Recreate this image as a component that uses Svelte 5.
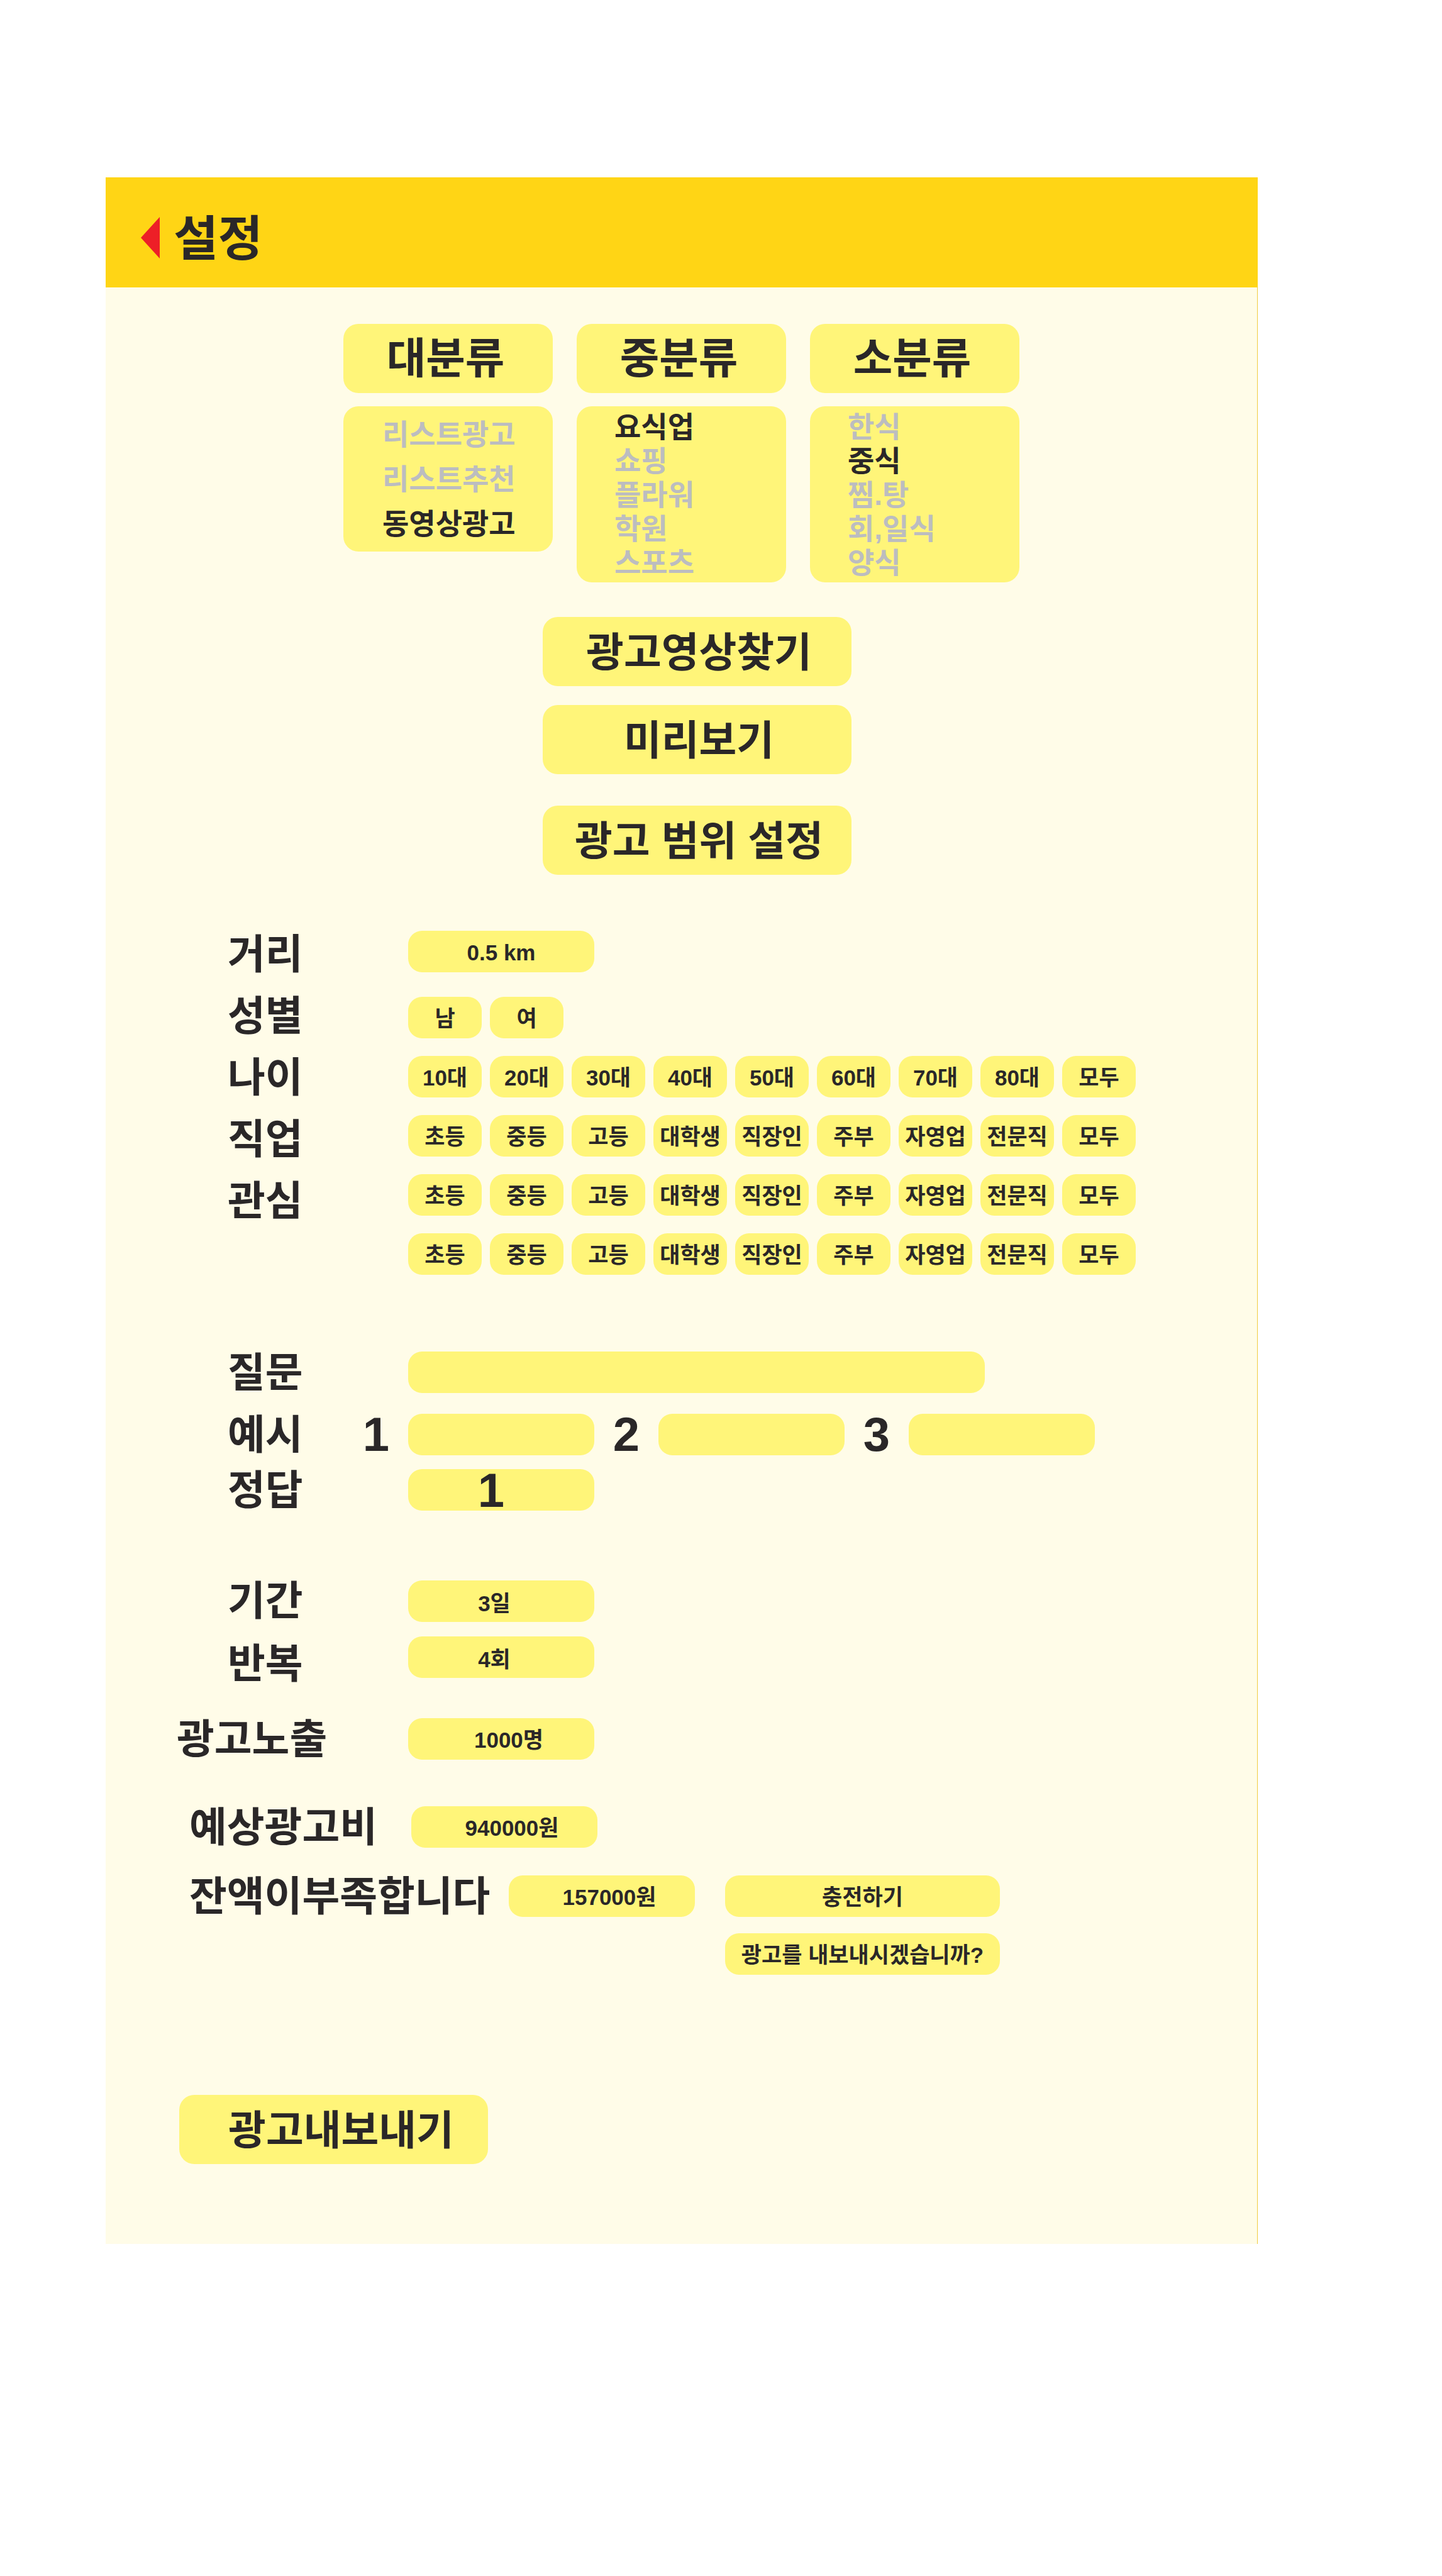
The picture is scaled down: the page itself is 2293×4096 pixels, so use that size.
<script>
  const categories = [
    { title: '대분류', roomy: true, items: ['리스트광고', '리스트추천', '동영상광고'], picked: '동영상광고' },
    { title: '중분류', roomy: false, items: ['요식업', '쇼핑', '플라워', '학원', '스포츠'], picked: '요식업' },
    { title: '소분류', roomy: false, items: ['한식', '중식', '찜.탕', '회,일식', '양식'], picked: '중식' }
  ];
  const genders = ['남', '여'];
  const ages = ['10대', '20대', '30대', '40대', '50대', '60대', '70대', '80대', '모두'];
  const jobs = ['초등', '중등', '고등', '대학생', '직장인', '주부', '자영업', '전문직', '모두'];

  let chosen = $state(categories.map((c) => c.picked));
  let question = $state('');
  let examples = $state(['', '', '']);
  let answer = $state('1');
  let distance = $state('0.5 km');
  let period = $state('3일');
  let repeat = $state('4회');
</script>

{#snippet chipRow(name, items)}
  <div class="chips" role="group" aria-labelledby={name}>
    {#each items as item}
      <button type="button" class="pill">{item}</button>
    {/each}
  </div>
{/snippet}

<main class="page">
  <div class="card">
    <header class="bar">
      <button type="button" class="back" aria-label="뒤로">
        <svg viewBox="0 0 30 66" aria-hidden="true"><path d="M0 33 30 0V66Z" fill="#ed1f27" /></svg>
      </button>
      <h1>설정</h1>
    </header>

    <div class="content">
      <section class="categories">
        {#each categories as category, c}
          <div class="category">
            <h2>{category.title}</h2>
            <ul class:roomy={category.roomy}>
              {#each category.items as item}
                <li>
                  <button
                    type="button"
                    class="option"
                    class:active={chosen[c] === item}
                    aria-pressed={chosen[c] === item}
                    onclick={() => (chosen[c] = item)}>{item}</button>
                </li>
              {/each}
            </ul>
          </div>
        {/each}
      </section>

      <section class="actions">
        <button type="button" class="big">광고영상찾기</button>
        <button type="button" class="big">미리보기</button>
        <button type="button" class="big range">광고 범위 설정</button>
      </section>

      <section class="target">
        <div class="target-labels">
          <label class="label" for="distance">거리</label>
          <span class="label" id="gender">성별</span>
          <span class="label" id="age">나이</span>
          <span class="label" id="job">직업</span>
          <span class="label" id="interest">관심</span>
        </div>
        <div class="target-fields">
          <input id="distance" class="pill field distance" bind:value={distance} />
          {@render chipRow('gender', genders)}
          {@render chipRow('age', ages)}
          {@render chipRow('job', jobs)}
          {@render chipRow('interest', jobs)}
          {@render chipRow('interest', jobs)}
        </div>
      </section>

      <section class="quiz">
        <div class="row">
          <label class="label wide" for="question">질문</label>
          <input id="question" class="pill question" bind:value={question} />
        </div>
        <div class="row examples">
          <span class="label short">예시</span>
          {#each examples as _, i}
            <label class="number" for="example-{i}">{i + 1}</label>
            <input id="example-{i}" class="pill field" bind:value={examples[i]} />
          {/each}
        </div>
        <div class="row">
          <label class="label wide" for="answer">정답</label>
          <input id="answer" class="pill field answer" bind:value={answer} />
        </div>
      </section>

      <section class="schedule">
        <div class="schedule-labels">
          <label class="label" for="period">기간</label>
          <label class="label" for="repeat">반복</label>
        </div>
        <div class="schedule-fields">
          <input id="period" class="pill field count" bind:value={period} />
          <input id="repeat" class="pill field count" bind:value={repeat} />
        </div>
      </section>

      <section class="row exposure">
        <span class="label">광고노출</span>
        <output class="pill field amount">1000명</output>
      </section>

      <section class="row cost">
        <span class="label">예상광고비</span>
        <output class="pill field amount">940000원</output>
      </section>

      <section class="row balance">
        <span class="label">잔액이부족합니다</span>
        <output class="pill field amount">157000원</output>
        <div class="confirm">
          <button type="button" class="pill">충전하기</button>
          <button type="button" class="pill">광고를 내보내시겠습니까?</button>
        </div>
      </section>

      <button type="submit" class="big submit">광고내보내기</button>
    </div>
  </div>
</main>

<style>
  :global(body) {
    background: #fff;
  }

  .page {
    padding: 282px 293px 528px 168px;
    color: #2a2728;
    font-family: 'Liberation Sans', 'Noto Sans CJK KR', sans-serif;
    font-weight: 700;
  }

  .page *,
  .page {
    box-sizing: border-box;
  }

  button,
  input {
    border: 0;
    margin: 0;
    padding: 0;
    background: none;
    color: inherit;
    font: inherit;
  }

  button {
    cursor: pointer;
    white-space: nowrap;
  }

  .card {
    background: #fffce8;
  }

  .bar {
    display: flex;
    align-items: center;
    gap: 22px;
    height: 175px;
    padding: 16px 56px 0;
    background: #ffd515;
  }

  .back,
  .back svg {
    display: block;
    width: 30px;
    height: 66px;
  }

  h1 {
    margin: 0;
    padding-top: 4px;
    font-size: 77px;
    line-height: 96px;
  }

  .content {
    padding: 58px 0 127px;
    border-right: 1px solid #f0cc40;
  }

  .categories {
    display: flex;
    justify-content: center;
    align-items: flex-start;
    gap: 38px;
  }

  .category {
    width: 333px;
  }

  h2 {
    margin: 0 0 21px;
    padding-right: 8px;
    border-radius: 24px;
    background: #fff579;
    font-size: 68px;
    line-height: 110px;
    text-align: center;
  }

  ul {
    display: flex;
    flex-direction: column;
    margin: 0;
    padding: 6px 0 4px 60px;
    border-radius: 24px;
    background: #fff579;
    list-style: none;
  }

  ul.roomy {
    gap: 17px;
    padding: 18px 0 17px 62px;
  }

  li {
    display: flex;
  }

  .option {
    color: #bcbdc0;
    font-size: 46px;
    line-height: 54px;
  }

  .option.active {
    color: #2a2728;
  }

  .actions {
    display: flex;
    flex-direction: column;
    align-items: center;
    gap: 30px;
    margin-top: 55px;
    padding-left: 50px;
  }

  .big {
    width: 491px;
    padding: 4px 0 0 6px;
    border-radius: 24px;
    background: #fff579;
    font-size: 65px;
    line-height: 106px;
    text-align: center;
  }

  .range {
    margin-top: 20px;
  }

  .label {
    flex: none;
    font-size: 65px;
    line-height: 68px;
    white-space: nowrap;
  }

  .pill {
    height: 66px;
    padding: 4px 0 0;
    border-radius: 22px;
    background: #fff579;
    font-size: 35px;
    line-height: 62px;
    text-align: center;
    white-space: nowrap;
  }

  .field {
    width: 296px;
  }

  .target {
    display: flex;
    margin-top: 78px;
    padding-left: 194px;
  }

  .target-labels,
  .schedule-labels {
    display: flex;
    flex-direction: column;
    width: 287px;
  }

  .target-labels .label {
    line-height: 98px;
  }

  .target-fields {
    display: flex;
    flex-direction: column;
    align-items: flex-start;
    gap: 28px;
    padding-top: 11px;
  }

  .distance {
    margin-bottom: 11px;
  }

  .chips {
    display: flex;
    gap: 13px;
  }

  .chips .pill {
    width: 117px;
  }

  .quiz {
    display: flex;
    flex-direction: column;
    margin-top: 122px;
    padding-left: 194px;
  }

  .row {
    display: flex;
    align-items: flex-start;
  }

  .quiz .row {
    height: 66px;
  }

  .wide {
    width: 287px;
  }

  .short {
    width: 185px;
  }

  .question {
    width: 917px;
    padding: 4px 24px 0;
    text-align: left;
  }

  .examples {
    margin: 33px 0 22px;
  }

  .number {
    width: 102px;
    font-size: 76px;
    line-height: 66px;
    text-align: center;
  }

  .answer {
    padding: 0 32px 0 0;
    font-size: 76px;
    line-height: 66px;
  }

  .schedule {
    display: flex;
    margin-top: 94px;
    padding-left: 194px;
  }

  .schedule-labels .label {
    line-height: 100px;
  }

  .schedule-fields {
    display: flex;
    flex-direction: column;
    gap: 23px;
    padding-top: 17px;
  }

  .count {
    padding: 0 22px 0 0;
  }

  .amount {
    padding-left: 24px;
  }

  .exposure {
    height: 66px;
    margin-top: 36px;
    padding-left: 113px;
  }

  .exposure .label {
    width: 368px;
  }

  .cost {
    height: 66px;
    margin-top: 74px;
    padding-left: 133px;
  }

  .cost .label {
    width: 353px;
  }

  .balance {
    margin-top: 44px;
    padding-left: 133px;
  }

  .balance .label {
    width: 508px;
  }

  .confirm {
    display: flex;
    flex-direction: column;
    gap: 26px;
    width: 437px;
    margin-left: 48px;
  }

  .submit {
    display: block;
    margin: 191px 0 0 117px;
    padding-left: 24px;
  }
</style>
